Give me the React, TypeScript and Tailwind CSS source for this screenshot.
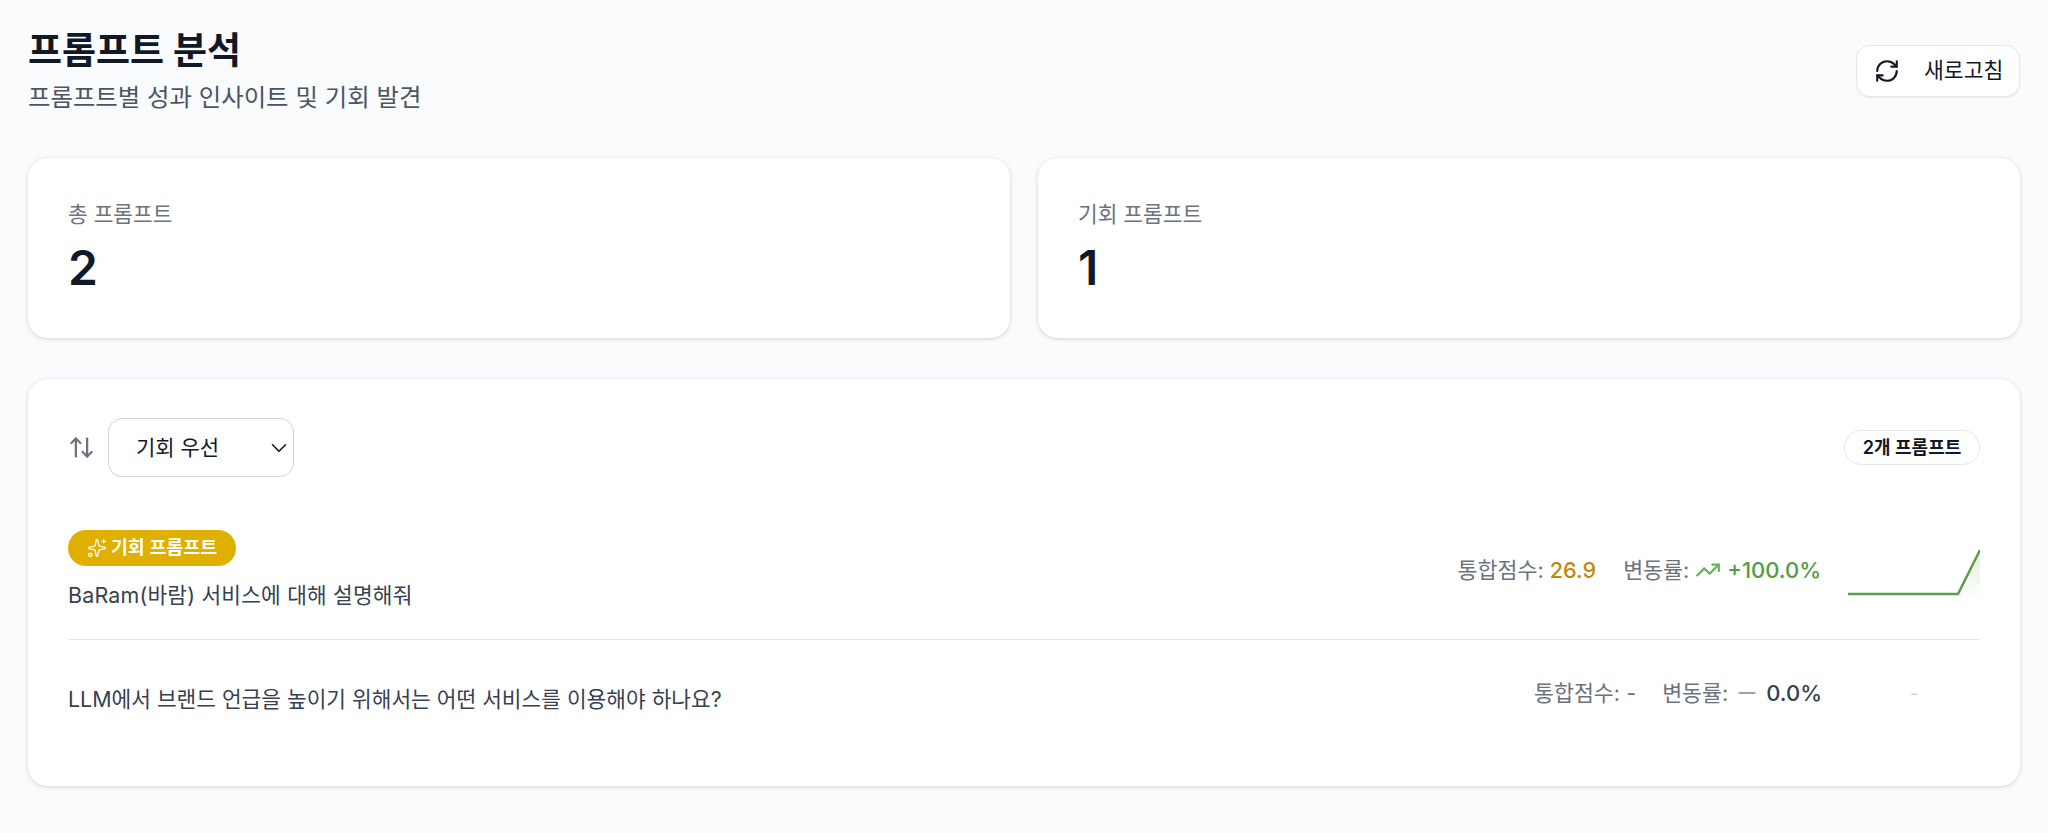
import { RefreshCw, ArrowUpDown, ChevronDown, Sparkles, TrendingUp, Minus } from "lucide-react";

function Stat({ label, value }: { label: string; value: string }) {
  return (
    <div className="flex-1 h-[180px] bg-white rounded-[20px] shadow-[0_1px_4px_rgba(0,0,0,0.16)] px-10 pt-[41px]">
      <div className="text-[21.4px] leading-[30px] text-[#6b7280]">{label}</div>
      <div className="text-[48px] leading-[56px] font-semibold text-[#111827] mt-[11px]">{value}</div>
    </div>
  );
}

export default function App() {
  return (
    <div
      className="min-h-[833px] bg-[#f9fbfd] px-7 pt-7"
      style={{ fontFamily: "Inter, 'Noto Sans CJK KR', sans-serif" }}
    >
      <div className="flex items-center justify-between">
        <div>
          <h1 className="text-[37px] leading-[44px] font-bold text-[#111827] pt-[1px]">프롬프트 분석</h1>
          <p className="text-[24.4px] leading-[32px] text-[#4b5563] mt-[8px]">프롬프트별 성과 인사이트 및 기회 발견</p>
        </div>
        <button className="h-[52px] w-[164px] bg-white rounded-[14px] border border-[#e5e7eb] shadow-[0_1px_2px_rgba(0,0,0,0.06)] flex items-center pl-[17px] text-[#111827]">
          <RefreshCw size={26} strokeWidth={2} />
          <span className="ml-[24px] text-[21.6px] font-normal">새로고침</span>
        </button>
      </div>

      <div className="flex gap-7 mt-[45px]">
        <Stat label="총 프롬프트" value="2" />
        <Stat label="기회 프롬프트" value="1" />
      </div>

      <div className="mt-[41px] h-[407px] bg-white rounded-[20px] shadow-[0_1px_4px_rgba(0,0,0,0.16)] px-10 pt-[39px]">
        <div className="flex items-center justify-between">
          <div className="flex items-center gap-[13px]">
            <ArrowUpDown size={27} className="text-[#6b7280]" strokeWidth={2} />
            <div className="relative w-[186px] h-[59px] rounded-[14px] border border-[#cfd3da] flex items-center pl-[27px] text-[21px] text-[#111827]">
              기회 우선
              <ChevronDown size={26} strokeWidth={1.5} className="absolute right-[1px] top-[16px] text-[#111827]" />
            </div>
          </div>
          <span className="h-[35px] w-[136px] flex items-center justify-center rounded-full border border-[#e5e7eb] text-[18px] font-semibold text-[#111827]">
            2개 프롬프트
          </span>
        </div>

        <div className="flex items-center justify-between h-[128px] mt-[35px] pb-[11px] border-b border-[#e5e7eb]">
          <div>
            <span className="inline-flex items-center gap-[4px] h-[36px] w-[168px] justify-center rounded-full bg-[#e0b000] text-white text-[18.4px] font-semibold">
              <Sparkles size={20} strokeWidth={1.5} />
              기회 프롬프트
            </span>
            <div className="text-[21.4px] tracking-[0.2px] leading-[30px] text-[#374151] mt-[14px]">BaRam(바람) 서비스에 대해 설명해줘</div>
          </div>
          <div className="flex items-center">
            <span className="text-[21.7px] text-[#6b7280]">통합점수: <span className="text-[#c4860c] font-medium">26.9</span></span>
            <span className="ml-[27px] text-[21.7px] text-[#6b7280]">변동률:</span>
            <TrendingUp size={26} strokeWidth={2} className="text-[#5fb84f] ml-[6px]" />
            <span className="ml-[6px] text-[22px] font-medium text-[#4f9e3f]">+100.0%</span>
            <svg width="132" height="50" viewBox="0 0 132 50" className="ml-[27px] mt-[8px]">
              <defs>
                <linearGradient id="sparkFill" x1="0" y1="0" x2="0" y2="1">
                  <stop offset="0" stopColor="#5b9f47" stopOpacity="0.18" />
                  <stop offset="1" stopColor="#5b9f47" stopOpacity="0" />
                </linearGradient>
              </defs>
              <path d="M110 45 L132 1 L132 50 L110 50 Z" fill="url(#sparkFill)" />
              <path d="M0 45 L110 45 L132 1" fill="none" stroke="#5b9f47" strokeWidth="2.5" />
            </svg>
          </div>
        </div>

        <div className="flex items-center justify-between h-[118px]">
          <div className="text-[21.4px] leading-[30px] text-[#374151]">LLM에서 브랜드 언급을 높이기 위해서는 어떤 서비스를 이용해야 하나요?</div>
          <div className="flex items-center pb-[12px]">
            <span className="text-[21.7px] text-[#6b7280]">통합점수: -</span>
            <span className="ml-[26px] text-[21.7px] text-[#6b7280]">변동률:</span>
            <Minus size={26} strokeWidth={2} className="text-[#9ca3af] ml-[6px]" />
            <span className="ml-[6px] text-[22px] font-medium text-[#374151]">0.0%</span>
            <div className="w-[132px] ml-[26px] flex justify-center text-[16px] text-[#c4c8cf]">-</div>
          </div>
        </div>
      </div>
    </div>
  );
}
